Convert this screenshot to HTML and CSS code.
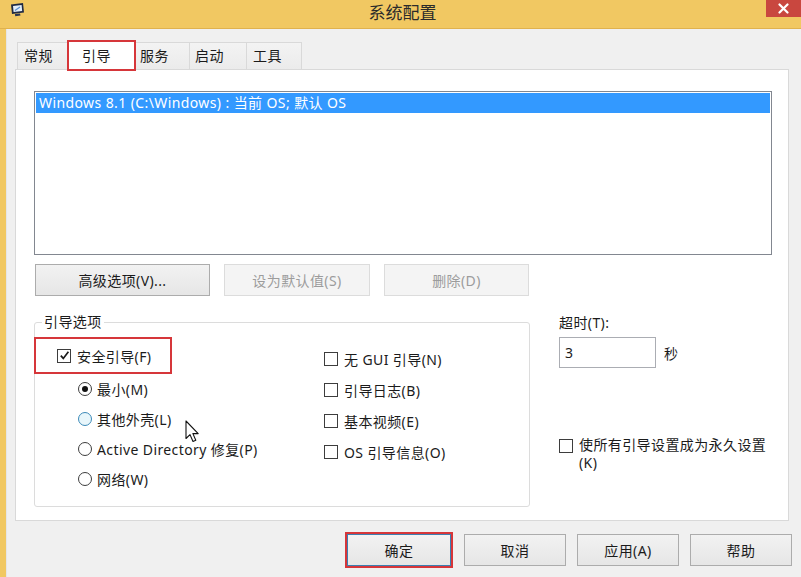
FILE: index.html
```html
<!DOCTYPE html>
<html lang="zh-CN">
<head>
<meta charset="utf-8">
<title>系统配置</title>
<link rel="stylesheet" href="styles.css">
</head>
<body>
<div class="window">
  <div class="titlebar">
    <svg class="app-icon" width="17" height="15" viewBox="0 0 17 15">
      <path d="M2 2.5 L14 1 L15 10.5 L3 12 Z" fill="#1f2a44"/>
      <path d="M4 4 L12.6 3 L13.2 9 L4.6 10 Z" fill="#e4eef8"/>
      <path d="M6 8.5 L11 5" stroke="#5b8fd0" stroke-width="1.2"/>
      <path d="M6 12 L11 11.4 L11.5 13.6 L6.2 14.2 Z" fill="#2b3652"/>
    </svg>
    <div class="title">系统配置</div>
    <div class="close">
      <svg width="11" height="11" viewBox="0 0 11 11"><path d="M1.5 1.5 L9.5 9.5 M9.5 1.5 L1.5 9.5" stroke="#fff" stroke-width="2.2" stroke-linecap="round"/></svg>
    </div>
  </div>
  <div class="frame">
    <div class="frame-left"></div>
    <div class="client">
      <div class="tabs">
        <div class="tab tab-first">常规</div>
        <div class="tab tab-active">引导</div>
        <div class="tab tab-after">服务</div>
        <div class="tab tab-wide">启动</div>
        <div class="tab">工具</div>
      </div>
      <div class="panel">
        <div class="listbox">
          <div class="list-item selected">Windows 8.1 (C:\Windows) : 当前 OS; 默认 OS</div>
        </div>
        <div class="btnrow">
          <button class="btn btn-adv">高级选项(V)...</button>
          <button class="btn btn-setdefault" disabled>设为默认值(S)</button>
          <button class="btn btn-delete" disabled>删除(D)</button>
        </div>
        <div class="options">
          <fieldset class="group">
            <legend>引导选项</legend>
            <div class="group-cols">
              <div class="col-left">
                <div class="highlight">
                  <span class="check checked"><svg width="11" height="11" viewBox="0 0 11 11"><path d="M1.8 5.6 L4.3 8.4 L9.4 1.8" fill="none" stroke="#1a1a1a" stroke-width="1.7"/></svg></span>
                  <span>安全引导(F)</span>
                </div>
                <div class="radio-row"><span class="radio on"></span><span>最小(M)</span></div>
                <div class="radio-row"><span class="radio hover"></span><span>其他外壳(L)</span></div>
                <div class="radio-row"><span class="radio"></span><span>Active Directory 修复(P)</span></div>
                <div class="radio-row"><span class="radio"></span><span>网络(W)</span></div>
              </div>
              <div class="col-right">
                <div class="check-row"><span class="check"></span><span>无 GUI 引导(N)</span></div>
                <div class="check-row"><span class="check"></span><span>引导日志(B)</span></div>
                <div class="check-row"><span class="check"></span><span>基本视频(E)</span></div>
                <div class="check-row"><span class="check"></span><span>OS 引导信息(O)</span></div>
              </div>
            </div>
          </fieldset>
          <div class="side">
            <div class="side-label">超时(T):</div>
            <div class="timeout">
              <div class="textbox">3</div>
              <span class="unit">秒</span>
            </div>
            <div class="permanent">
              <span class="check"></span>
              <span class="permanent-text">使所有引导设置成为永久设置 (K)</span>
            </div>
          </div>
        </div>
      </div>
      <div class="footer">
        <button class="btn btn-foot btn-ok">确定</button>
        <button class="btn btn-foot">取消</button>
        <button class="btn btn-foot">应用(A)</button>
        <button class="btn btn-foot">帮助</button>
      </div>
    </div>
  </div>
  <svg class="cursor" width="16" height="24" viewBox="0 0 16 24">
    <path d="M1 1 L1 18.5 L5 14.6 L8 21.5 L10.8 20.3 L7.9 13.6 L13.2 13.6 Z" fill="#fff" stroke="#111" stroke-width="1.1" stroke-linejoin="round"/>
  </svg>
</div>
</body>
</html>
```

FILE: styles.css
```css
* { box-sizing: border-box; }
html, body { margin: 0; padding: 0; }
body {
  width: 801px;
  height: 577px;
  overflow: hidden;
  font-family: "Noto Sans", "Noto Sans CJK SC", sans-serif;
  font-size: 14px;
  letter-spacing: 0.4px;
  color: #1b1b1b;
  background: #f0f0f0;
}
.window {
  position: relative;
  width: 801px;
  height: 577px;
  display: flex;
  flex-direction: column;
  background: #f0f0f0;
}

/* title bar */
.titlebar {
  flex: none;
  height: 29px;
  background: #f1c862;
  border-bottom: 1px solid #e0b24e;
  display: grid;
  grid-template-columns: 1fr auto 1fr;
  align-items: start;
}
.app-icon { margin: 2px 0 0 9px; }
.title {
  font-family: "Noto Sans CJK SC", sans-serif;
  font-size: 17px;
  letter-spacing: 0;
  line-height: 24px;
  color: #2b2b2b;
  padding-left: 4px;
}
.close {
  justify-self: end;
  width: 35px;
  height: 17px;
  background: #c9473f;
  display: flex;
  align-items: center;
  justify-content: center;
}

/* frame */
.frame { flex: 1; display: flex; min-height: 0; }
.frame-left {
  width: 7px;
  background: #f1c862;
  border-right: 1px solid #e6e6e6;
}
.client {
  flex: 1;
  padding: 11px 9px 0 8px;
  display: flex;
  flex-direction: column;
}

/* tabs */
.tabs {
  display: flex;
  align-items: flex-end;
  height: 29px;
  padding-left: 2px;
  position: relative;
  z-index: 1;
}
.tab {
  height: 27px;
  width: 56px;
  margin-left: -1px;
  padding-left: 6px;
  line-height: 25px;
  border: 1px solid #d9d9d9;
  border-bottom: none;
  background: linear-gradient(#f3f3f3, #ebebeb);
}
.tab-first { width: 51px; margin-left: 0; }
.tab-after { width: 55px; padding-left: 4px; }
.tab-wide { width: 58px; padding-left: 5px; }
.tab-active {
  height: 31px;
  width: 69px;
  margin-bottom: -2px;
  padding-left: 13px;
  line-height: 28px;
  background: #fff;
  border: 2px solid #d6363a;
  position: relative;
  z-index: 2;
}

/* panel */
.panel {
  flex: none;
  height: 452px;
  margin-right: 3px;
  border: 1px solid #d9d9d9;
  background: #fff;
}
.listbox {
  margin: 21px 0 0 18px;
  width: 738px;
  height: 164px;
  border: 1px solid #828790;
  padding: 1px 1px 0 1px;
}
.list-item {
  height: 20px;
  line-height: 20px;
  padding-left: 3px;
}
.list-item.selected { background: #3399ff; color: #fff; }

.btnrow {
  display: flex;
  gap: 14px;
  margin: 9px 0 0 19px;
}
.btn {
  height: 32px;
  padding: 0;
  border: 1px solid #acacac;
  background: linear-gradient(#f2f2f2, #e6e6e6);
  font-family: inherit;
  font-size: 14px;
  letter-spacing: inherit;
  color: #1b1b1b;
}
.btn:disabled {
  border-color: #dcdcdc;
  background: #f4f4f4;
  color: #9c9c9c;
}
.btn-adv { width: 175px; }
.btn-setdefault { width: 146px; }
.btn-delete { width: 145px; }

/* options */
.options {
  display: flex;
  margin-top: 16px;
}
.group {
  margin: 0 0 0 18px;
  width: 496px;
  height: 195px;
  padding: 0;
  border: 1px solid #dcdcdc;
  border-radius: 3px;
  min-width: 0;
}
.group legend {
  margin-left: 7px;
  padding: 0 2px;
  line-height: 20px;
}
.group-cols { display: flex; }
.col-left { width: 289px; }
.highlight {
  margin: 5px 0 0 -1px;
  width: 138px;
  height: 37px;
  border: 2px solid #d6363a;
  display: flex;
  align-items: center;
  gap: 6px;
  padding-left: 21px;
}
.radio-row {
  height: 30px;
  display: flex;
  align-items: center;
  gap: 5px;
  padding-left: 43px;
}
.radio {
  width: 14px;
  height: 14px;
  border: 1px solid #3d3d3d;
  border-radius: 50%;
  background: #fff;
  display: flex;
  align-items: center;
  justify-content: center;
}
.radio.on::after {
  content: "";
  width: 6px;
  height: 6px;
  border-radius: 50%;
  background: #111;
}
.radio.hover { border-color: #3c8ab8; background: #e8f6fb; }

.col-right { padding-top: 11px; }
.check-row {
  height: 31px;
  display: flex;
  align-items: center;
  gap: 6px;
}
.check {
  flex: none;
  width: 14px;
  height: 14px;
  border: 1px solid #3d3d3d;
  background: #fff;
  display: flex;
  align-items: center;
  justify-content: center;
}

.side {
  margin-left: 29px;
  width: 215px;
}
.side-label {
  margin-top: 1px;
  line-height: 20px;
}
.timeout {
  margin-top: 4px;
  display: flex;
  align-items: center;
  gap: 8px;
}
.textbox {
  width: 97px;
  height: 31px;
  border: 1px solid #abadb3;
  background: #fff;
  padding-left: 5px;
  line-height: 29px;
}
.permanent {
  margin-top: 68px;
  display: flex;
  align-items: flex-start;
  gap: 6px;
}
.permanent .check { margin-top: 3px; }
.permanent-text {
  width: 196px;
  line-height: 18px;
}

/* footer */
.footer {
  display: flex;
  justify-content: flex-end;
  gap: 11px;
  margin-top: 13px;
}
.btn-foot { width: 102px; }
.btn-ok {
  width: 104px;
  margin-right: 2px;
  border-color: #3c7fb1;
  outline: 2px solid #d6363a;
}

/* mouse pointer over the dialog */
.cursor {
  position: absolute;
  left: 185px;
  top: 420px;
}
```
